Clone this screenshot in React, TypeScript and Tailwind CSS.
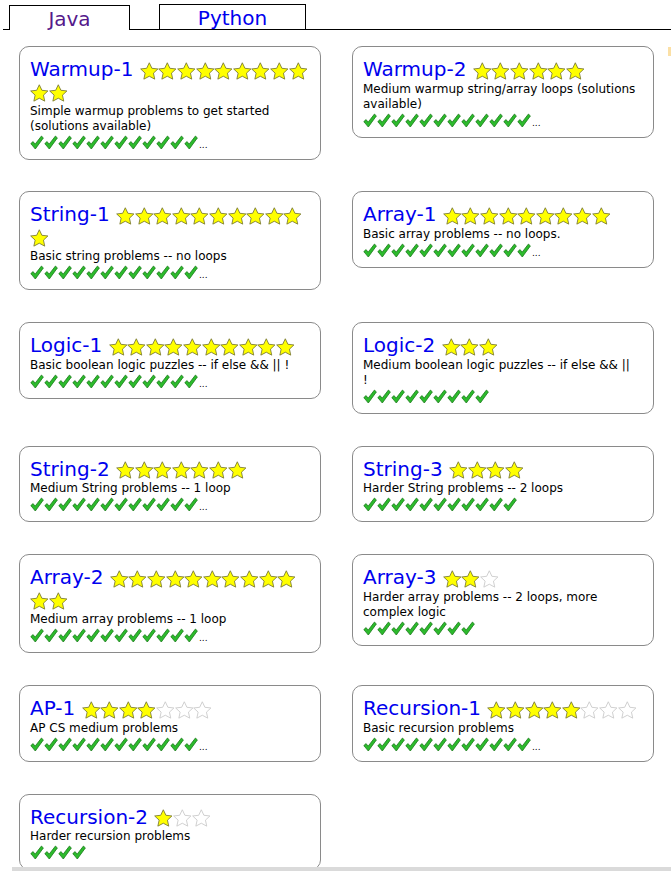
import React from "react";

type Section = {
  title: string;
  full: number;
  empty?: number;
  desc: React.ReactNode;
  checks: number;
  more?: boolean;
};

const left: Section[] = [
  { title: "Warmup-1", full: 11, desc: "Simple warmup problems to get started (solutions available)", checks: 12, more: true },
  { title: "String-1", full: 11, desc: "Basic string problems -- no loops", checks: 12, more: true },
  { title: "Logic-1", full: 10, desc: "Basic boolean logic puzzles -- if else && || !", checks: 12, more: true },
  { title: "String-2", full: 7, desc: "Medium String problems -- 1 loop", checks: 12, more: true },
  { title: "Array-2", full: 12, desc: "Medium array problems -- 1 loop", checks: 12, more: true },
  { title: "AP-1", full: 4, empty: 3, desc: "AP CS medium problems", checks: 12, more: true },
  { title: "Recursion-2", full: 1, empty: 2, desc: "Harder recursion problems", checks: 4 },
];

const right: Section[] = [
  { title: "Warmup-2", full: 6, desc: "Medium warmup string/array loops (solutions available)", checks: 12, more: true },
  { title: "Array-1", full: 9, desc: "Basic array problems -- no loops.", checks: 12, more: true },
  {
    title: "Logic-2",
    full: 3,
    desc: (
      <>
        Medium boolean logic puzzles -- if else &amp;&amp; ||
        <br />!
      </>
    ),
    checks: 9,
  },
  { title: "String-3", full: 4, desc: "Harder String problems -- 2 loops", checks: 11 },
  { title: "Array-3", full: 2, empty: 1, desc: "Harder array problems -- 2 loops, more complex logic", checks: 8 },
  { title: "Recursion-1", full: 5, empty: 3, desc: "Basic recursion problems", checks: 12, more: true },
];

function Star({ on }: { on: boolean }) {
  return (
    <svg viewBox="0.4 0.2 19.2 18" className="inline-block w-[18.6px] h-[18px]">
      <polygon
        points="10,0.7 12.7,6.4 18.9,7.1 14.3,11.4 15.6,17.6 10,14.6 4.4,17.6 5.7,11.4 1.1,7.1 7.3,6.4"
        fill={on ? "#ffff00" : "#ffffff"}
        stroke={on ? "#7a7a34" : "#c9c9c9"}
        strokeWidth="0.9"
        strokeLinejoin="round"
      />
    </svg>
  );
}

function Check() {
  return (
    <svg viewBox="0 0 14 15" className="w-[14px] h-[15px] shrink-0">
      <polygon
        points="0.8,8.6 3.1,6.6 5.1,9.2 11.4,1.1 13.4,2.9 5.3,14"
        fill="#2cbb2c"
        stroke="#1c7a1c"
        strokeWidth="0.8"
        strokeLinejoin="round"
      />
    </svg>
  );
}

function Card({ s }: { s: Section }) {
  return (
    <div className="w-[302px] shrink-0 rounded-[10px] border border-[#8a8a8a] bg-white pt-[11px] px-[10px] pb-[9px]">
      <div className="text-[20px] leading-[22.5px]">
        <span className="text-[#0000ee]">{s.title}</span>{" "}
        {Array.from({ length: s.full }).map((_, i) => (
          <Star key={"f" + i} on />
        ))}
        {Array.from({ length: s.empty ?? 0 }).map((_, i) => (
          <Star key={"e" + i} on={false} />
        ))}
      </div>
      <div className="mt-[1px] text-[12px] leading-[15px] text-black">{s.desc}</div>
      <div className="flex items-end h-[16px]">
        {Array.from({ length: s.checks }).map((_, i) => (
          <Check key={i} />
        ))}
        {s.more && <span className="text-[9px] leading-[10px] ml-[1px] text-black">...</span>}
      </div>
    </div>
  );
}

export default function App() {
  const rows = left.map((l, i) => [l, right[i]] as const);
  return (
    <div className="relative min-h-screen overflow-hidden bg-white font-['DejaVu_Sans',sans-serif]">
      {/* tabs */}
      <div className="ml-[3px] flex items-end h-[30px] border-b border-black">
        <div className="ml-[6px] mb-[-1px] w-[121px] h-[25px] border-t border-l border-r border-black bg-white pt-[2px] text-center text-[20px] leading-[22.5px] text-[#551a8b]">
          Java
        </div>
        <div className="ml-[29px] w-[147px] h-[25px] border-t border-l border-r border-black bg-white pt-[2px] text-center text-[20px] leading-[22.5px] text-[#0000ee]">
          Python
        </div>
      </div>

      <div className="absolute right-0 top-[47px] w-[3px] h-[9px] bg-[#fbe0a6]" />

      {/* sections */}
      <div className="mt-[16px] ml-[19px] flex flex-col gap-[32px]">
        {rows.map(([l, r], i) => (
          <div key={i} className={"flex items-start gap-[31px]" + (i === 1 ? " -mt-[1px]" : "")}>
            <Card s={l} />
            {r && <Card s={r} />}
          </div>
        ))}
      </div>

      <div className="fixed bottom-0 left-[12px] right-0 h-[4px] bg-[#dadada]" />
    </div>
  );
}
